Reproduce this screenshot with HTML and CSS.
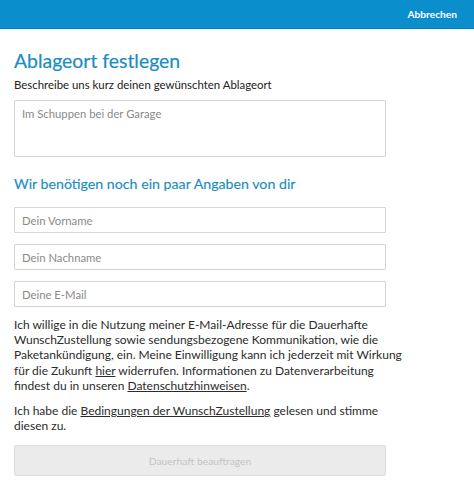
FILE: index.html
```html
<!DOCTYPE html>
<html lang="de">
<head>
<meta charset="utf-8">
<title>Ablageort festlegen</title>
<link rel="stylesheet" href="styles.css">
</head>
<body>
<header class="topbar">
  <a class="cancel" href="#">Abbrechen</a>
</header>
<main class="content">
  <h1 class="title">Ablageort festlegen</h1>
  <p class="lead">Beschreibe uns kurz deinen gewünschten Ablageort</p>
  <textarea class="field area" placeholder="Im Schuppen bei der Garage"></textarea>
  <h2 class="subtitle">Wir benötigen noch ein paar Angaben von dir</h2>
  <div class="fields">
    <input class="field" type="text" placeholder="Dein Vorname">
    <input class="field" type="text" placeholder="Dein Nachname">
    <input class="field" type="email" placeholder="Deine E-Mail">
  </div>
  <p class="text">Ich willige in die Nutzung meiner E-Mail-Adresse für die Dauerhafte WunschZustellung sowie sendungsbezogene Kommunikation, wie die Paketankündigung, ein. Meine Einwilligung kann ich jederzeit mit Wirkung für die Zukunft <a href="#">hier</a> widerrufen. Informationen zu Datenverarbeitung findest&nbsp;du&nbsp;in unseren <a href="#">Datenschutzhinweisen</a>.</p>
  <p class="text">Ich habe die <a href="#">Bedingungen der WunschZustellung</a> gelesen und stimme diesen&nbsp;zu.</p>
  <button class="submit" type="button" disabled>Dauerhaft beauftragen</button>
</main>
</body>
</html>
```

FILE: styles.css
```css
* { box-sizing: border-box; }
body {
  margin: 0;
  background: #fff;
  font-family: Lato, "Open Sans", sans-serif;
  color: #333;
}
.topbar {
  height: 29px;
  background: #0b8fcc;
  border-bottom: 1px solid #0a7fb6;
  display: flex;
  justify-content: flex-end;
  align-items: center;
  padding-right: 17px;
}
.cancel {
  color: #fff;
  font-size: 10.2px;
  font-weight: 700;
  text-decoration: none;
}
.content {
  width: 400px;
  padding: 0 14px;
  display: flex;
  flex-direction: column;
}
.title {
  margin: 19px 0 0;
  font-size: 19.4px;
  font-weight: 400;
  line-height: 26px;
  color: #1b8dc0;
  -webkit-text-stroke: 0.2px #1b8dc0;
}
.lead {
  margin: 3px 0 7px;
  font-size: 11.4px;
  line-height: 16px;
  color: #222;
}
.field {
  display: block;
  width: 372px;
  height: 26px;
  border: 1px solid #d4d4d4;
  border-radius: 1px;
  padding: 0 7px;
  font-family: inherit;
  font-size: 11.3px;
  color: #333;
  background: #fff;
  outline: none;
}
.field::placeholder { color: #8a8a8a; }
.area {
  height: 57px;
  padding: 6px 7px;
  resize: none;
}
.subtitle {
  margin: 17px 0 13px;
  font-size: 14.2px;
  font-weight: 400;
  line-height: 20px;
  color: #1b8dc0;
  -webkit-text-stroke: 0.15px #1b8dc0;
}
.fields {
  display: flex;
  flex-direction: column;
  gap: 11px;
}
.text {
  width: 400px;
  margin: 10px 0 0;
  font-size: 12px;
  line-height: 15.2px;
  color: #2b2b2b;
}
.text + .text { margin-top: 10px; }
.text a { color: #2b2b2b; }
.submit {
  margin-top: 12px;
  width: 372px;
  height: 31px;
  background: #ebebeb;
  border: 1px solid #dcdcdc;
  border-radius: 2px;
  font-family: inherit;
  font-size: 10.3px;
  color: #c4c4c4;
}
```
